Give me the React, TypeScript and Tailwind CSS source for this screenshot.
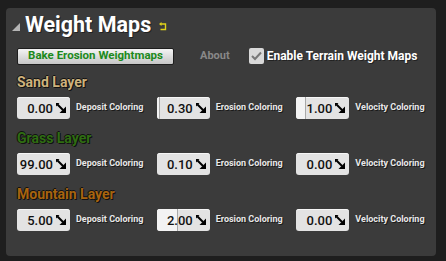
import React from 'react';

const font = "font-['Roboto','Liberation_Sans',sans-serif]";

const ResizeIcon = () => (
  <svg width="10" height="10" viewBox="0 0 10 10" className="relative shrink-0">
    <path d="M1.5 1.5 L7 7" stroke="#000" strokeWidth="2" />
    <path d="M10 3.5 L10 10 L3.5 10 Z" fill="#000" />
    <path d="M0 0 L3.5 0 L0 3.5 Z" fill="#000" />
  </svg>
);

const SpinBox = ({ value, fill }: { value: string; fill: number }) => (
  <div className="relative flex h-[22px] w-[53px] shrink-0 items-center justify-end gap-[3px] overflow-hidden rounded-[3px] bg-[#e3e3e3] pr-[4px] shadow-[inset_0_1px_0_#f6f6f6]">
    {fill > 0 && (
      <div
        className="absolute inset-y-0 left-0 border-r border-[#a8a8a8] bg-[#f3f3f3]"
        style={{ width: fill }}
      />
    )}
    <span className="relative text-[13px] font-medium leading-none text-[#111]">{value}</span>
    <ResizeIcon />
  </div>
);

const Field = ({ value, fill, label }: { value: string; fill: number; label: string }) => (
  <div className="flex w-[140px] items-center gap-[6px]">
    <SpinBox value={value} fill={fill} />
    <span className="text-[9px] font-bold text-[#e8e8e8] [text-shadow:1px_1px_0_#1a1a1a]">
      {label}
    </span>
  </div>
);

const layers = [
  {
    name: 'Sand Layer',
    color: 'text-[#cdb27c]',
    values: [
      ['0.00', 0],
      ['0.30', 3],
      ['1.00', 10],
    ],
  },
  {
    name: 'Grass Layer',
    color: 'text-[#2f6d12]',
    values: [
      ['99.00', 0],
      ['0.10', 0],
      ['0.00', 0],
    ],
  },
  {
    name: 'Mountain Layer',
    color: 'text-[#a8640e]',
    values: [
      ['5.00', 0],
      ['2.00', 21],
      ['0.00', 0],
    ],
  },
];

const labels = ['Deposit Coloring', 'Erosion Coloring', 'Velocity Coloring'];

export default function App() {
  return (
    <div className={`h-[261px] w-[446px] bg-[#1e1e1e] pl-[6px] pt-[8px] ${font}`}>
      <div className="h-[248px] w-[430px] rounded-[4px] bg-[#3b3b3b] pl-[11px] pt-[2px]">
        {/* header */}
        <div className="-ml-[5px] flex h-[30px] items-center">
          <svg width="8" height="8" viewBox="0 0 8 8" className="mt-[3px] shrink-0">
            <path d="M8 0 L8 8 L0 8 Z" fill="#b5b5b5" />
          </svg>
          <span className="ml-[5px] text-[21.5px] font-bold leading-none text-white [text-shadow:1px_1px_0_#222]">
            Weight Maps
          </span>
          <svg width="8" height="9" viewBox="0 0 8 9" className="ml-[8px] mt-[3px] shrink-0">
            <path d="M0 2 L2.5 0 L2.5 4 Z" fill="#e0d21a" />
            <path d="M2 2 H6.5 V7.5 H1.5" stroke="#e0d21a" strokeWidth="1.4" fill="none" />
          </svg>
        </div>

        {/* toolbar */}
        <div className="mt-[7px] flex h-[18px] items-center">
          <button className="flex h-[17px] w-[157px] items-center justify-center rounded-[2px] border border-[#1e1e1e] bg-gradient-to-b from-[#f4f4f4] to-[#c6c6c6] text-[11.5px] font-bold leading-none text-[#1c8a1c]">
            Bake Erosion Weightmaps
          </button>
          <span className="ml-[26px] text-[11px] font-bold text-[#888]">About</span>
          <div className="ml-[19px] flex h-[16px] w-[15px] items-center justify-center rounded-[2px] bg-[#d9d9d9]">
            <svg width="11" height="10" viewBox="0 0 11 10">
              <path d="M1 5 L4 8 L10 1.5" stroke="#777" strokeWidth="2" fill="none" />
            </svg>
          </div>
          <span className="ml-[3px] text-[12px] font-bold text-white [text-shadow:1px_1px_0_#222]">
            Enable Terrain Weight Maps
          </span>
        </div>

        {/* layers */}
        {layers.map((layer, idx) => (
          <div key={layer.name} className={`flex flex-col ${idx === 0 ? 'mt-[9px]' : 'mt-[11px]'}`}>
            <div
              className={`h-[16px] text-[14px] font-bold leading-[16px] ${layer.color} [text-shadow:1px_1px_0_#111,-1px_0_0_#111,0_-1px_0_#111]`}
            >
              {layer.name}
            </div>
            <div className="mt-[7px] flex">
              {layer.values.map(([v, f], i) => (
                <Field key={i} value={v as string} fill={f as number} label={labels[i]} />
              ))}
            </div>
          </div>
        ))}
      </div>
    </div>
  );
}
